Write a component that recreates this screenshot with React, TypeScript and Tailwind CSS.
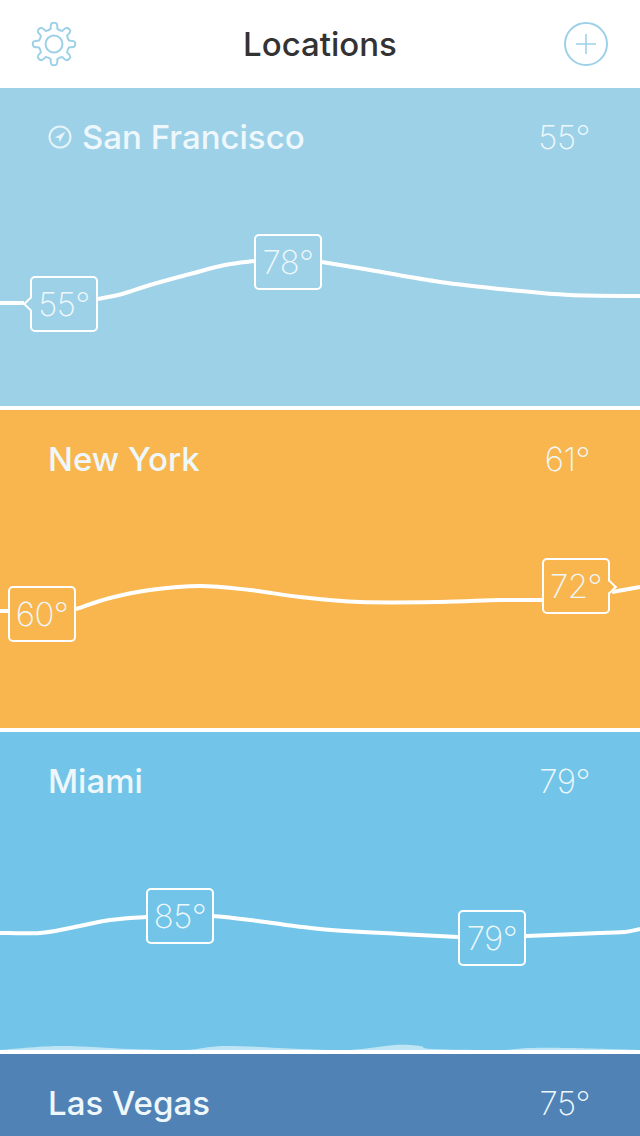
import React from "react";

type Pt = [number, number];

function smooth(pts: Pt[]): string {
  let d = `M${pts[0][0]} ${pts[0][1]}`;
  for (let i = 0; i < pts.length - 1; i++) {
    const p0 = pts[Math.max(i - 1, 0)];
    const p1 = pts[i];
    const p2 = pts[i + 1];
    const p3 = pts[Math.min(i + 2, pts.length - 1)];
    const c1x = p1[0] + (p2[0] - p0[0]) / 6;
    const c1y = p1[1] + (p2[1] - p0[1]) / 6;
    const c2x = p2[0] - (p3[0] - p1[0]) / 6;
    const c2y = p2[1] - (p3[1] - p1[1]) / 6;
    d += ` C${c1x.toFixed(1)} ${c1y.toFixed(1)} ${c2x.toFixed(1)} ${c2y.toFixed(1)} ${p2[0]} ${p2[1]}`;
  }
  return d;
}

function gearPath(cx: number, cy: number): string {
  const teeth = 8;
  const outer = 21;
  const inner = 15.5;
  let d = "";
  for (let i = 0; i < teeth; i++) {
    const a = (i / teeth) * Math.PI * 2 - Math.PI / 2;
    const step = (Math.PI * 2) / teeth;
    const pt = (r: number, t: number) =>
      `${(cx + r * Math.cos(a + t * step)).toFixed(2)} ${(cy + r * Math.sin(a + t * step)).toFixed(2)}`;
    d += `${i === 0 ? "M" : "L"}${pt(inner, -0.28)} C${pt(inner + 2, -0.24)} ${pt(outer, -0.22)} ${pt(outer, -0.1)} `;
    d += `Q${pt(outer + 0.6, 0)} ${pt(outer, 0.1)} C${pt(outer, 0.22)} ${pt(inner + 2, 0.24)} ${pt(inner, 0.28)} `;
    d += `Q${pt(inner - 1, 0.5)} ${pt(inner, 0.72)} `;
  }
  return d + "Z";
}

type Tag = { label: string; x: number; y: number; pointer?: "left" | "right"; pointerY?: number };

type Loc = {
  name: string;
  temp: string;
  bg: string;
  line: Pt[][];
  tags: Tag[];
  located?: boolean;
  wave?: boolean;
};

const locations: Loc[] = [
  {
    name: "San Francisco",
    temp: "55°",
    bg: "bg-[#9dd1e7]",
    located: true,
    line: [
      [[0, 215], [24, 215]],
      [[98, 211], [122, 206], [150, 197], [190, 186], [225, 177], [254, 173]],
      [[322, 174], [370, 182], [440, 194], [510, 202], [570, 207], [640, 208]],
    ],
    tags: [
      { label: "55°", x: 30, y: 188, pointer: "left", pointerY: 21 },
      { label: "78°", x: 254, y: 146 },
    ],
  },
  {
    name: "New York",
    temp: "61°",
    bg: "bg-[#f9b64e]",
    line: [
      [[0, 201], [8, 201]],
      [[76, 199], [110, 188], [150, 180], [200, 176], [250, 180], [300, 187], [360, 192], [440, 192], [500, 190], [542, 190]],
      [[612, 182], [640, 177]],
    ],
    tags: [
      { label: "60°", x: 8, y: 176 },
      { label: "72°", x: 542, y: 148, pointer: "right", pointerY: 22 },
    ],
  },
  {
    name: "Miami",
    temp: "79°",
    bg: "bg-[#72c5e8]",
    wave: true,
    line: [
      [[0, 201], [40, 201], [70, 196], [110, 188], [146, 185]],
      [[214, 184], [250, 188], [320, 197], [400, 202], [458, 205]],
      [[526, 204], [600, 201], [625, 200], [640, 197]],
    ],
    tags: [
      { label: "85°", x: 146, y: 156 },
      { label: "79°", x: 458, y: 178 },
    ],
  },
];

const wave: Pt[] = [
  [0, 318], [60, 314], [130, 317], [185, 318], [225, 314], [300, 317], [350, 318],
  [395, 313], [420, 314], [432, 317], [500, 318], [530, 316], [570, 316], [640, 318],
];

function TempTag({ tag, bg }: { tag: Tag; bg: string }) {
  return (
    <div
      className={`absolute w-[68px] h-[56px] rounded-[5px] border-2 border-white flex items-center justify-center pt-[2px] text-[33px] font-[250] text-[#eef8fc] tracking-[-0.5px] ${bg}`}
      style={{ left: tag.x, top: tag.y }}
    >
      {tag.label}
      {tag.pointer === "left" && (
        <span
          className={`absolute left-[-7px] w-[10px] h-[10px] rotate-45 border-l-2 border-b-2 border-white ${bg}`}
          style={{ top: tag.pointerY }}
        />
      )}
      {tag.pointer === "right" && (
        <span
          className={`absolute right-[-7px] w-[10px] h-[10px] rotate-45 border-r-2 border-t-2 border-white ${bg}`}
          style={{ top: tag.pointerY }}
        />
      )}
    </div>
  );
}

function LocationCard({ loc }: { loc: Loc }) {
  return (
    <section className={`relative h-[318px] shrink-0 ${loc.bg}`}>
      <div className="flex items-center justify-between pl-12 pr-[50px] pt-[29px]">
        <div className="flex items-center gap-[10px]">
          {loc.located && (
            <svg width="24" height="24" viewBox="0 0 24 24" fill="none" className="shrink-0 opacity-90">
              <circle cx="12" cy="12" r="10.5" stroke="#eef8fc" strokeWidth="2" />
              <path d="M17.5 6.5 L10.6 10.6 L6.5 12.6 L11 13 L11.5 17.5 Z" fill="#eef8fc" />
            </svg>
          )}
          <span className="text-[33px] leading-[40px] font-medium text-[#eef8fc]">{loc.name}</span>
        </div>
        <span className="text-[33px] leading-[40px] font-[250] text-[#eef8fc] tracking-[-0.5px]">{loc.temp}</span>
      </div>
      <svg viewBox="0 0 640 318" className="absolute inset-0 w-full h-full" fill="none">
        {loc.wave && <path d={smooth(wave) + " Z"} fill="#ffffff" fillOpacity="0.55" />}
        {loc.line.map((seg, i) => (
          <path key={i} d={smooth(seg)} stroke="#ffffff" strokeWidth="4" />
        ))}
      </svg>
      {loc.tags.map((t) => (
        <TempTag key={t.label} tag={t} bg={loc.bg} />
      ))}
    </section>
  );
}

export default function App() {
  return (
    <div className="w-[640px] h-[1136px] overflow-hidden bg-white flex flex-col font-['Inter','Liberation_Sans',sans-serif]">
      <header className="h-[88px] shrink-0 flex items-center justify-between pl-[31px] pr-[31px]">
        <svg width="46" height="46" viewBox="0 0 46 46" fill="none" stroke="#9dd1e7" strokeWidth="2">
          <path d={gearPath(23, 23)} strokeLinejoin="round" />
          <circle cx="23" cy="23" r="8.5" />
        </svg>
        <h1 className="text-[33px] leading-none font-medium text-[#333333]">Locations</h1>
        <svg width="46" height="46" viewBox="0 0 46 46" fill="none" stroke="#9dd1e7">
          <circle cx="23" cy="23" r="21" strokeWidth="2" />
          <path d="M23 13 V33 M13 23 H33" strokeWidth="1.5" />
        </svg>
      </header>
      <div className="flex flex-col gap-1">
        {locations.map((loc) => (
          <LocationCard key={loc.name} loc={loc} />
        ))}
        <section className="h-[82px] shrink-0 bg-[#5182b5] flex items-start justify-between pl-12 pr-[50px] pt-[29px]">
          <span className="text-[33px] leading-[40px] font-medium text-[#eef8fc]">Las Vegas</span>
          <span className="text-[33px] leading-[40px] font-[250] text-[#eef8fc] tracking-[-0.5px]">75°</span>
        </section>
      </div>
    </div>
  );
}
